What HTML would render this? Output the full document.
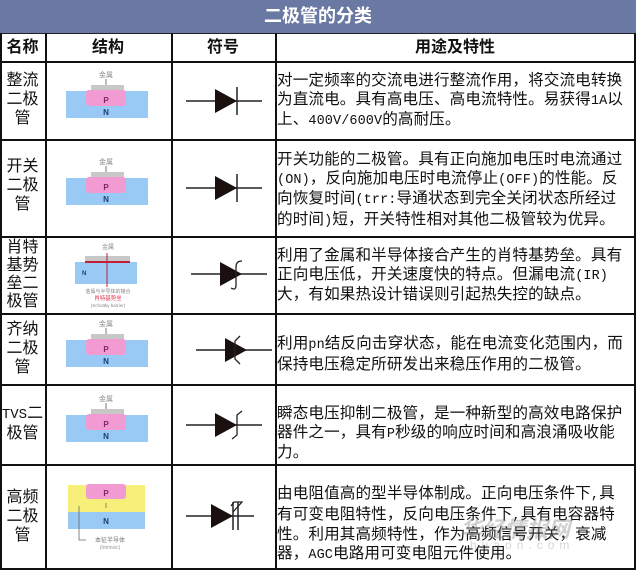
<!DOCTYPE html>
<html><head><meta charset="utf-8"><style>
body{margin:0;width:636px;height:571px;background:#fff;overflow:hidden;font-family:"Liberation Sans","Noto Sans CJK SC",sans-serif;}
.a{position:absolute;}
.t{left:0;top:0;width:636px;height:33px;background:#6a79a3;color:#fff;font-size:18px;font-weight:bold;text-align:center;line-height:33px;border-bottom:1px solid #222;}
.h{position:absolute;top:34px;height:28px;line-height:28px;text-align:center;font-weight:bold;font-size:16px;color:#111;}
.n{position:absolute;left:0;width:45px;text-align:center;font-size:16px;line-height:19px;color:#111;white-space:nowrap;font-family:"Liberation Mono","Noto Sans CJK SC",sans-serif;}
.d{position:absolute;left:277px;width:358px;font-size:15.6px;line-height:18.7px;color:#111;white-space:nowrap;font-family:"Liberation Mono","Noto Sans CJK SC",monospace;letter-spacing:0.1px;}
.d span.l{font-size:13.5px;}
.hl{position:absolute;left:0;width:636px;height:2px;background:#111;}
.vl{position:absolute;top:33px;width:1.5px;height:537px;background:#111;}
</style></head><body>
<div class="a t">二极管的分类</div>
<div class="hl" style="top:61px"></div>
<div class="hl" style="top:139px"></div>
<div class="hl" style="top:236px"></div>
<div class="hl" style="top:313px"></div>
<div class="hl" style="top:384px"></div>
<div class="hl" style="top:464px"></div>
<div class="hl" style="top:568px"></div>
<div class="vl" style="left:0"></div>
<div class="vl" style="left:45px"></div>
<div class="vl" style="left:171px"></div>
<div class="vl" style="left:275px"></div>
<div class="vl" style="left:634px"></div>
<div class="h" style="left:0;width:45px">名称</div>
<div class="h" style="left:45px;width:126px">结构</div>
<div class="h" style="left:171px;width:104px">符号</div>
<div class="h" style="left:275px;width:360px">用途及特性</div>

<div class="n" style="top:72px">整流<br>二极<br>管</div>
<div class="n" style="top:158px">开关<br>二极<br>管</div>
<div class="n" style="top:239px;line-height:18px">肖特<br>基势<br>垒二<br>极管</div>
<div class="n" style="top:321px">齐纳<br>二极<br>管</div>
<div class="n" style="top:405px"><span style="font-size:14px">TVS</span>二<br>极管</div>
<div class="n" style="top:489px">高频<br>二极<br>管</div>

<div class="d" style="top:72px">对一定频率的交流电进行整流作用，将交流电转换<br>为直流电。具有高电压、高电流特性。易获得<span class="l">1A</span>以<br>上、<span class="l">400V/600V</span>的高耐压。</div>
<div class="d" style="top:151px">开关功能的二极管。具有正向施加电压时电流通过<br><span class="l">(ON)</span>，反向施加电压时电流停止<span class="l">(OFF)</span>的性能。反<br>向恢复时间<span class="l">(trr:</span>导通状态到完全关闭状态所经过<br>的时间<span class="l">)</span>短，开关特性相对其他二极管较为优异。</div>
<div class="d" style="top:247px">利用了金属和半导体接合产生的肖特基势垒。具有<br>正向电压低，开关速度快的特点。但漏电流<span class="l">(IR)</span><br>大，有如果热设计错误则引起热失控的缺点。</div>
<div class="d" style="top:335px">利用<span class="l">pn</span>结反向击穿状态，能在电流变化范围内，而<br>保持电压稳定所研发出来稳压作用的二极管。</div>
<div class="d" style="top:405px">瞬态电压抑制二极管，是一种新型的高效电路保护<br>器件之一，具有<span class="l">P</span>秒级的响应时间和高浪涌吸收能<br>力。</div>
<div class="d" style="top:485px">由电阻值高的型半导体制成。正向电压条件下<span class="l">,</span>具<br>有可变电阻特性，反向电压条件下<span class="l">,</span>具有电容器特<br>性。利用其高频特性，作为高频信号开关，衰减<br>器，<span class="l">AGC</span>电路用可变电阻元件使用。</div>

<svg class="a" style="left:0;top:0" width="636" height="571" font-family="Liberation Sans,Noto Sans CJK SC,sans-serif">
<defs>
<g id="pn">
<text x="106" y="-24" font-size="7" fill="#888" text-anchor="middle">金属</text>
<line x1="106" y1="-22" x2="106" y2="-15" stroke="#777"/>
<rect x="91" y="-16" width="33" height="6" fill="#c8c8c8"/>
<rect x="66" y="-10" width="82" height="27" fill="#99c9f5"/>
<rect x="86" y="-11" width="40" height="16" rx="3" fill="#f29bd2"/>
<text x="106" y="2" font-size="8" font-weight="bold" fill="#7a2a66" text-anchor="middle">P</text>
<text x="106" y="14" font-size="8" font-weight="bold" fill="#203a70" text-anchor="middle">N</text>
</g>
<g id="di">
<line x1="186" y1="0" x2="262" y2="0" stroke="#222" stroke-width="1.5"/>
<polygon points="215,-12 237,0 215,12" fill="#1a1010"/>
</g>
</defs>
<g transform="translate(0,101)"><use href="#pn"/><use href="#di"/><line x1="237" y1="-14" x2="237" y2="14" stroke="#222" stroke-width="1.5"/></g>
<g transform="translate(0,188)"><use href="#pn"/><use href="#di"/><line x1="237" y1="-14" x2="237" y2="14" stroke="#222" stroke-width="1.5"/></g>
<g transform="translate(0,275)">
<text x="108" y="-26" font-size="6" fill="#888" text-anchor="middle">金属</text>
<rect x="85" y="-19" width="45" height="6" fill="#c8c8c8"/>
<rect x="75" y="-13" width="62" height="22" fill="#99c9f5"/>
<line x1="85" y1="-13" x2="130" y2="-13" stroke="#c0203a" stroke-width="2"/>
<line x1="107" y1="-22" x2="107" y2="12" stroke="#c0203a" stroke-width="1"/>
<text x="82" y="0" font-size="6" font-weight="bold" fill="#203a70">N</text>
<text x="108" y="18" font-size="5" fill="#888" text-anchor="middle">金属与半导体的接合</text>
<text x="108" y="25" font-size="5.5" fill="#e0304a" text-anchor="middle">肖特基势垒</text>
<text x="108" y="32" font-size="4.5" fill="#888" text-anchor="middle">(Schottky barrier)</text>
<use href="#di" transform="translate(5,-1)"/>
<path d="M242 -14 Q236 -14 236 -8 L236 10 Q236 16 231 13" fill="none" stroke="#222" stroke-width="1.3"/>
</g>
<g transform="translate(0,350)"><use href="#pn"/><use href="#di" transform="translate(10,0)"/><path d="M240 -14 L235 -9 L235 9 L240 14" fill="none" stroke="#222" stroke-width="1.3"/></g>
<g transform="translate(0,425)"><use href="#pn"/><use href="#di"/><path d="M242 -14 L237 -10 L237 10 L232 14" fill="none" stroke="#222" stroke-width="1.3"/></g>
<g transform="translate(0,516)">
<rect x="68" y="-31" width="77" height="27" fill="#f6f07a"/>
<rect x="68" y="-4" width="77" height="17" fill="#99c9f5"/>
<rect x="86" y="-32" width="40" height="15" rx="3" fill="#f29bd2"/>
<text x="106" y="-20" font-size="8" font-weight="bold" fill="#7a2a66" text-anchor="middle">P</text>
<text x="106" y="-8" font-size="7" fill="#555" text-anchor="middle">I</text>
<text x="106" y="8" font-size="8" font-weight="bold" fill="#203a70" text-anchor="middle">N</text>
<path d="M79 -10 L79 24 L86 24" fill="none" stroke="#666" stroke-width="0.8"/>
<text x="110" y="26" font-size="6" fill="#777" text-anchor="middle">本征半导体</text>
<text x="110" y="33" font-size="5" fill="#999" text-anchor="middle">(Intrinsic)</text>
<line x1="186" y1="0" x2="254" y2="0" stroke="#222" stroke-width="1.5"/>
<polygon points="211,-12 233,0 211,12" fill="#1a1010"/>
<line x1="233" y1="-14" x2="233" y2="14" stroke="#222" stroke-width="1.5"/>
<line x1="238" y1="-14" x2="238" y2="14" stroke="#222" stroke-width="1.5"/>
<path d="M231 -10 L234 -14 L242 -14 L233 -4" fill="none" stroke="#222" stroke-width="1.3"/>
</g>
</svg>
<div class="a" style="left:460px;top:512px;font-size:22px;font-weight:bold;color:rgba(120,120,120,0.35);font-style:italic">华经情报网</div>
<div class="a" style="left:470px;top:538px;font-size:12px;color:rgba(150,150,150,0.4);letter-spacing:5px">huaon.com</div>
</body></html>
